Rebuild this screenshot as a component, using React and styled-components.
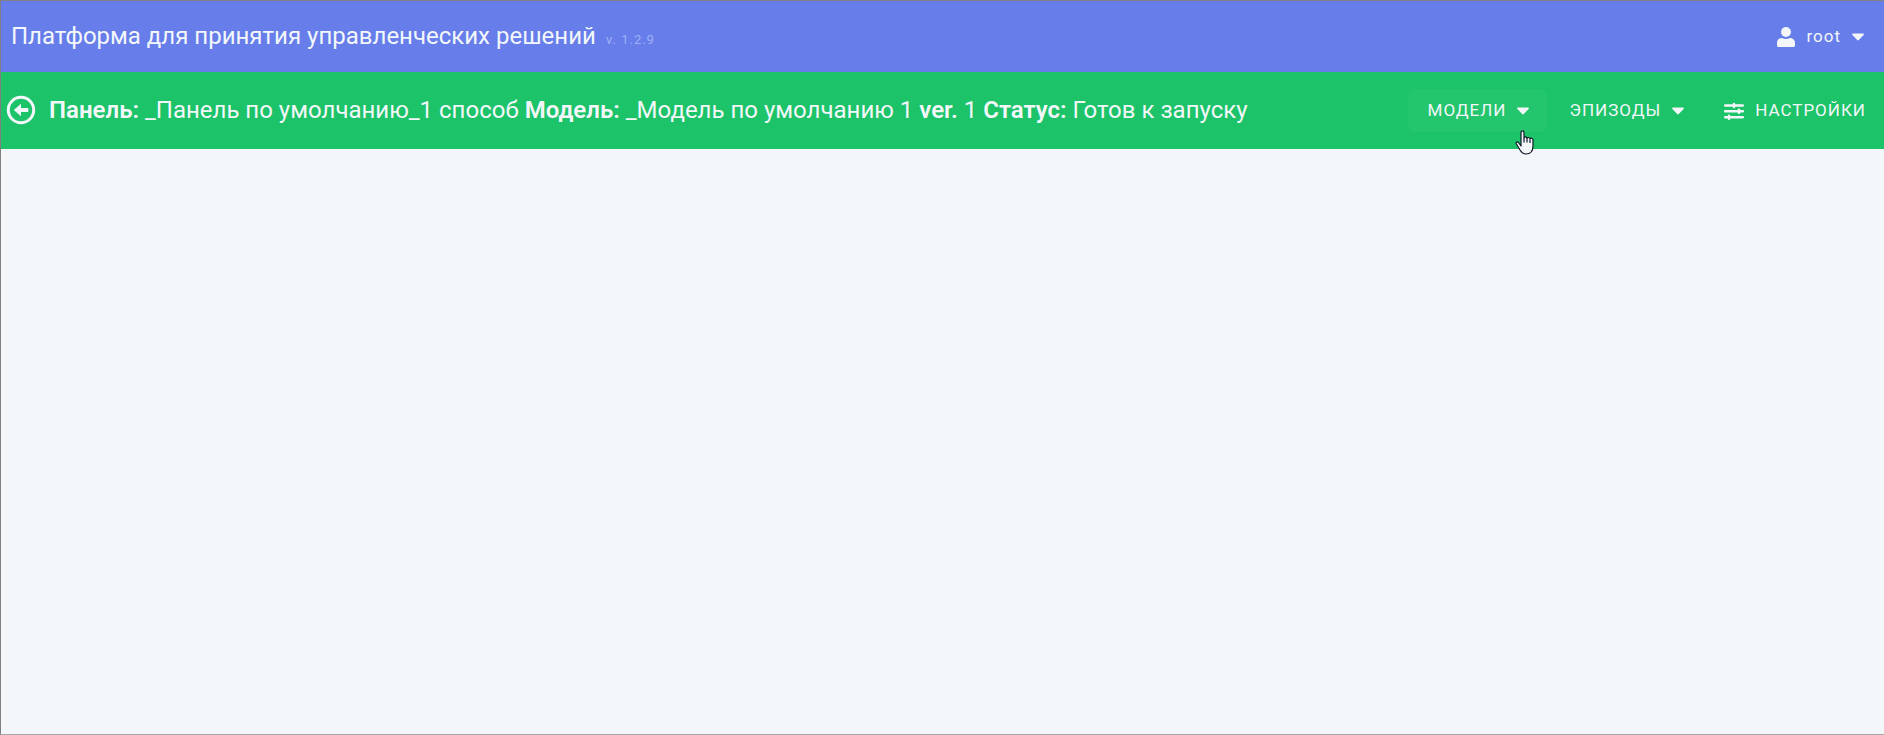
import React from "react";
import styled, { createGlobalStyle, css } from "styled-components";

const GlobalStyle = createGlobalStyle`
  *, *::before, *::after { box-sizing: border-box; }
  body {
    margin: 0;
    background: #f3f7fa;
    color: #f3f7fa;
    font-family: Roboto, "Noto Sans", sans-serif;
  }
`;

const Page = styled.div`
  display: flex;
  flex-direction: column;
  min-height: 100vh;
  border: 1px solid #808080;
  border-right: 0;
  border-bottom-color: #a9a9a9;
`;

const Bar = styled.header`
  display: flex;
  align-items: center;
  justify-content: space-between;
`;

const TopBar = styled(Bar)`
  height: 71px;
  padding-left: 10px;
  padding-right: 2px;
  background: #667dea;
`;

const PanelBar = styled(Bar).attrs({ as: "section" })`
  height: 77px;
  padding-left: 4px;
  background: #1cc368;
`;

const heading = css`
  margin: 0;
  font-size: 24px;
  line-height: 32px;
  font-weight: 400;
  white-space: nowrap;
`;

const Brand = styled.div`
  display: flex;
  align-items: baseline;
  gap: 10px;
  padding-bottom: 2px;
`;

const Title = styled.h1`
  ${heading}
`;

const Version = styled.span`
  font-size: 13px;
  letter-spacing: 1px;
  color: #9fb0f6;
`;

const PanelInfo = styled.div`
  display: flex;
  align-items: center;
  gap: 12px;
  padding-bottom: 2px;
`;

const PanelTitle = styled.h2`
  ${heading}
  b { font-weight: 600; }
`;

const BackLink = styled.a`
  display: flex;
  padding: 1px;
  color: inherit;
`;

const Nav = styled.nav`
  display: flex;
  align-items: center;
  gap: 2px;
`;

const MenuButton = styled.button`
  display: flex;
  align-items: center;
  gap: 11px;
  height: 43px;
  padding: 0 18px 0 20px;
  border: 0;
  border-radius: 7px;
  background: ${({ $active }) => ($active ? "#24c66d" : "transparent")};
  color: inherit;
  font: 400 17px/24px Roboto, "Noto Sans", sans-serif;
  letter-spacing: 1px;
  white-space: nowrap;
  cursor: pointer;
`;

const Label = styled.span`
  padding-bottom: 2px;
`;

const Workspace = styled.main`
  flex: 1;
`;

const Pointer = styled.svg`
  position: absolute;
  top: 130px;
  right: 350px;
  pointer-events: none;
`;

const Caret = () => (
  <svg width="12" height="8" viewBox="0 0 12 8" aria-hidden="true">
    <path d="M1 0.4h10c.9 0 1.2.9.6 1.5L6.8 7a1.1 1.1 0 0 1-1.6 0L.4 1.9C-.2 1.3.1.4 1 .4z" fill="currentColor" />
  </svg>
);

const UserIcon = () => (
  <svg width="18" height="20" viewBox="0 0 18 20" aria-hidden="true">
    <circle cx="9" cy="5" r="5" fill="currentColor" />
    <path d="M5 11c1.2.6 2.600.9 4 .9s2.800-.3 4-.9c3 0 5 2.200 5 5v2.200c0 1-.7 1.800-1.700 1.800H1.700C.7 20 0 19.200 0 18.200V16c0-2.800 2-5 5-5z" fill="currentColor" />
  </svg>
);

const TuneIcon = () => (
  <svg width="20" height="18" viewBox="0 0 20 18" fill="none" stroke="currentColor" strokeLinecap="round" aria-hidden="true">
    <path d="M1.200 3.500h17.600M1.200 9.200h17.600M1.200 15.200h17.600" strokeWidth="2.600" />
    <path d="M10 2v3M15 7.700v3M5 13.700v3" strokeWidth="2.600" />
  </svg>
);

const BackIcon = () => (
  <svg width="30" height="30" viewBox="0 0 30 30" aria-hidden="true">
    <circle cx="15" cy="15" r="12.700" fill="none" stroke="currentColor" strokeWidth="3" />
    <path d="M7.800 15l7.200-6.300v4.300h6.500c.5 0 .8.300.8.800v2.400c0 .5-.3.800-.8.800H15v4.300z" fill="currentColor" />
  </svg>
);

export default function App() {
  return (
    <>
      <GlobalStyle />
      <Page>
        <TopBar>
          <Brand>
            <Title>Платформа для принятия управленческих решений</Title>
            <Version>v. 1.2.9</Version>
          </Brand>
          <MenuButton type="button">
            <UserIcon />
            <Label>root</Label>
            <Caret />
          </MenuButton>
        </TopBar>
        <PanelBar>
          <PanelInfo>
            <BackLink href="#" aria-label="Назад">
              <BackIcon />
            </BackLink>
            <PanelTitle>
              <b>Панель:</b> _Панель по умолчанию_1 способ <b>Модель:</b> _Модель по умолчанию 1 <b>ver.</b> 1{" "}
              <b>Статус:</b> Готов к запуску
            </PanelTitle>
          </PanelInfo>
          <Nav>
            <MenuButton type="button" $active>
              <Label>МОДЕЛИ</Label>
              <Caret />
            </MenuButton>
            <MenuButton type="button">
              <Label>ЭПИЗОДЫ</Label>
              <Caret />
            </MenuButton>
            <MenuButton type="button">
              <TuneIcon />
              <Label>НАСТРОЙКИ</Label>
            </MenuButton>
          </Nav>
        </PanelBar>
        <Workspace />
        <Pointer width="19" height="25" viewBox="0 0 19 25" aria-hidden="true">
          <path
            d="M6 16V2.500C6 .2 9 .2 9 2.500V8c0-1.500 3-1.500 3 .5 0-1.500 3-1.300 3 .5 0-1.300 3-1 3 1v6c0 5-2.500 8-7 8-3 0-4.500-1.500-6-4l-3.500-6c-1-2 .8-2.800 2-1.500z"
            fill="#f3f7fa"
            stroke="#111827"
            strokeWidth="1.200"
            strokeLinejoin="round"
          />
          <path d="M9 8v4.500M12 8.500v4M15 9.500v3.500" stroke="#111827" strokeWidth="1.200" />
        </Pointer>
      </Page>
    </>
  );
}
